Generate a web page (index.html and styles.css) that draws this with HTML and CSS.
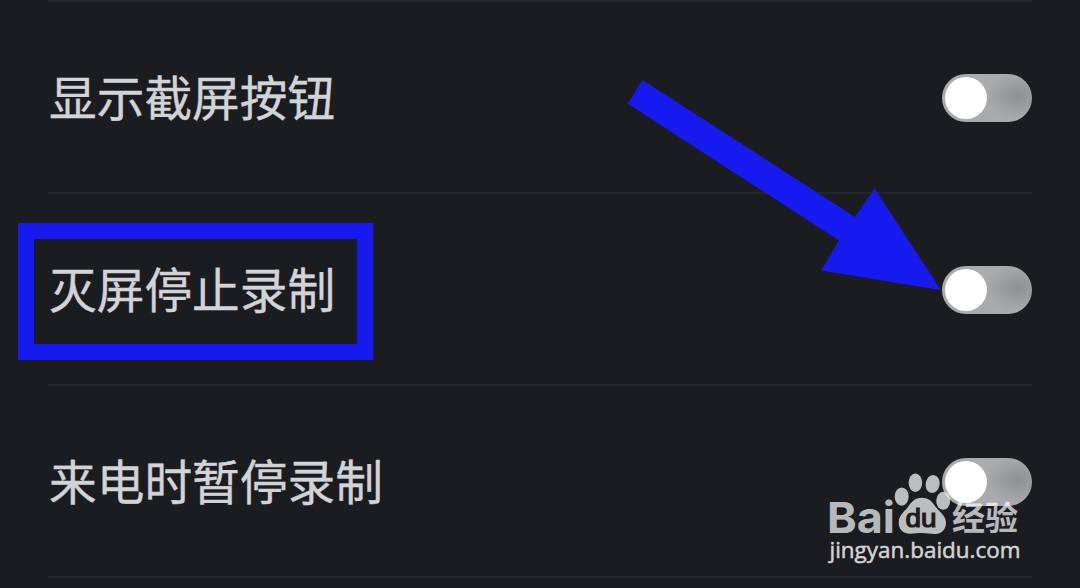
FILE: index.html
```html
<!DOCTYPE html>
<html lang="zh-CN">
<head>
<meta charset="utf-8">
<title>录制设置</title>
<link rel="stylesheet" href="styles.css">
</head>
<body>
<main class="settings">
  <div class="row"><span class="label">显示截屏按钮</span><span class="switch"><span class="knob"></span></span></div>
  <div class="row"><span class="label">灭屏停止录制</span><span class="switch"><span class="knob"></span></span></div>
  <div class="row"><span class="label">来电时暂停录制</span><span class="switch"><span class="knob"></span></span></div>
</main>
<div class="highlight"></div>
<svg class="overlay" width="1080" height="588" viewBox="0 0 1080 588">
  <polygon class="arrow" points="642.5,80 627.5,103.5 839,240.500 821,270.500 941,290 874.500,188.500 855,217"/>
  <g class="watermark">
    <text class="brand" x="827" y="532.500" textLength="68" lengthAdjust="spacingAndGlyphs">Bai</text>
    <ellipse cx="901.700" cy="496.600" rx="7" ry="9.200"/>
    <ellipse cx="915.400" cy="482.800" rx="6.800" ry="9.200"/>
    <ellipse cx="932.600" cy="484" rx="7" ry="9" transform="rotate(10 932.6 484)"/>
    <ellipse cx="943.200" cy="500.800" rx="7" ry="9"/>
    <path d="M921.700 497.700C915 497.700 911 502 908 507C905 511 898.700 515 898.700 523C898.700 530 904 533.700 910 533.700C915 533.700 917 533 922 533C927 533 930 534 935 534C942 534 946 529 946 523C946 515 939 512 935 506C932 501 928 497.700 921.700 497.700Z"/>
    <text class="du" x="905.500" y="527" textLength="31" lengthAdjust="spacingAndGlyphs">du</text>
    <text class="product" x="952" y="530" textLength="66" lengthAdjust="spacingAndGlyphs">经验</text>
    <text class="site" x="829.500" y="558.300" textLength="191" lengthAdjust="spacingAndGlyphs">jingyan.baidu.com</text>
  </g>
</svg>
</body>
</html>
```
FILE: styles.css
```css
body {
  margin: 0;
  height: 588px;
  overflow: hidden;
  background: #1b1c20;
  font-family: "Liberation Sans", "Noto Sans CJK SC", sans-serif;
}
.settings {
  margin: 0 48px;
  border-top: 2px solid #25262a;
}
.row {
  box-sizing: border-box;
  height: 192px;
  display: flex;
  align-items: center;
  justify-content: space-between;
  border-bottom: 2px solid #25262a;
}
.label {
  padding-left: 1px;
  font-family: "Noto Sans CJK SC", sans-serif;
  font-size: 47.700px;
  line-height: 58px;
  margin-top: -2px;
  color: #d2d3d7;
  -webkit-text-stroke: .4px #d2d3d7;
}
.switch {
  box-sizing: border-box;
  width: 90px;
  height: 48px;
  padding: 3px;
  margin-top: 2px;
  border-radius: 24px;
  background: radial-gradient(ellipse 34px 24px at 76px 22px, #8f9092, #a9abad);
}
.knob {
  display: block;
  width: 42px;
  height: 42px;
  border-radius: 50%;
  background: #fff;
}
.highlight {
  position: absolute;
  left: 18px;
  top: 223px;
  box-sizing: border-box;
  width: 355px;
  height: 137px;
  border: 16px solid #171aee;
}
.overlay {
  position: absolute;
  left: 0;
  top: 0;
}
.arrow {
  fill: #171aee;
}
.watermark {
  fill: rgba(255, 255, 255, .71);
}
.brand {
  font: 700 43px Inter, sans-serif;
}
.du {
  font: 25.500px "Liberation Sans", sans-serif;
  fill: #1b1c20;
  stroke: #1b1c20;
  stroke-width: 1.2px;
}
.product {
  font: 700 33px "Noto Sans CJK SC", sans-serif;
}
.site {
  font: 21.500px "Open Sans", sans-serif;
  fill: #d3d3d4;
  stroke: #d3d3d4;
  stroke-width: .5px;
}
```
